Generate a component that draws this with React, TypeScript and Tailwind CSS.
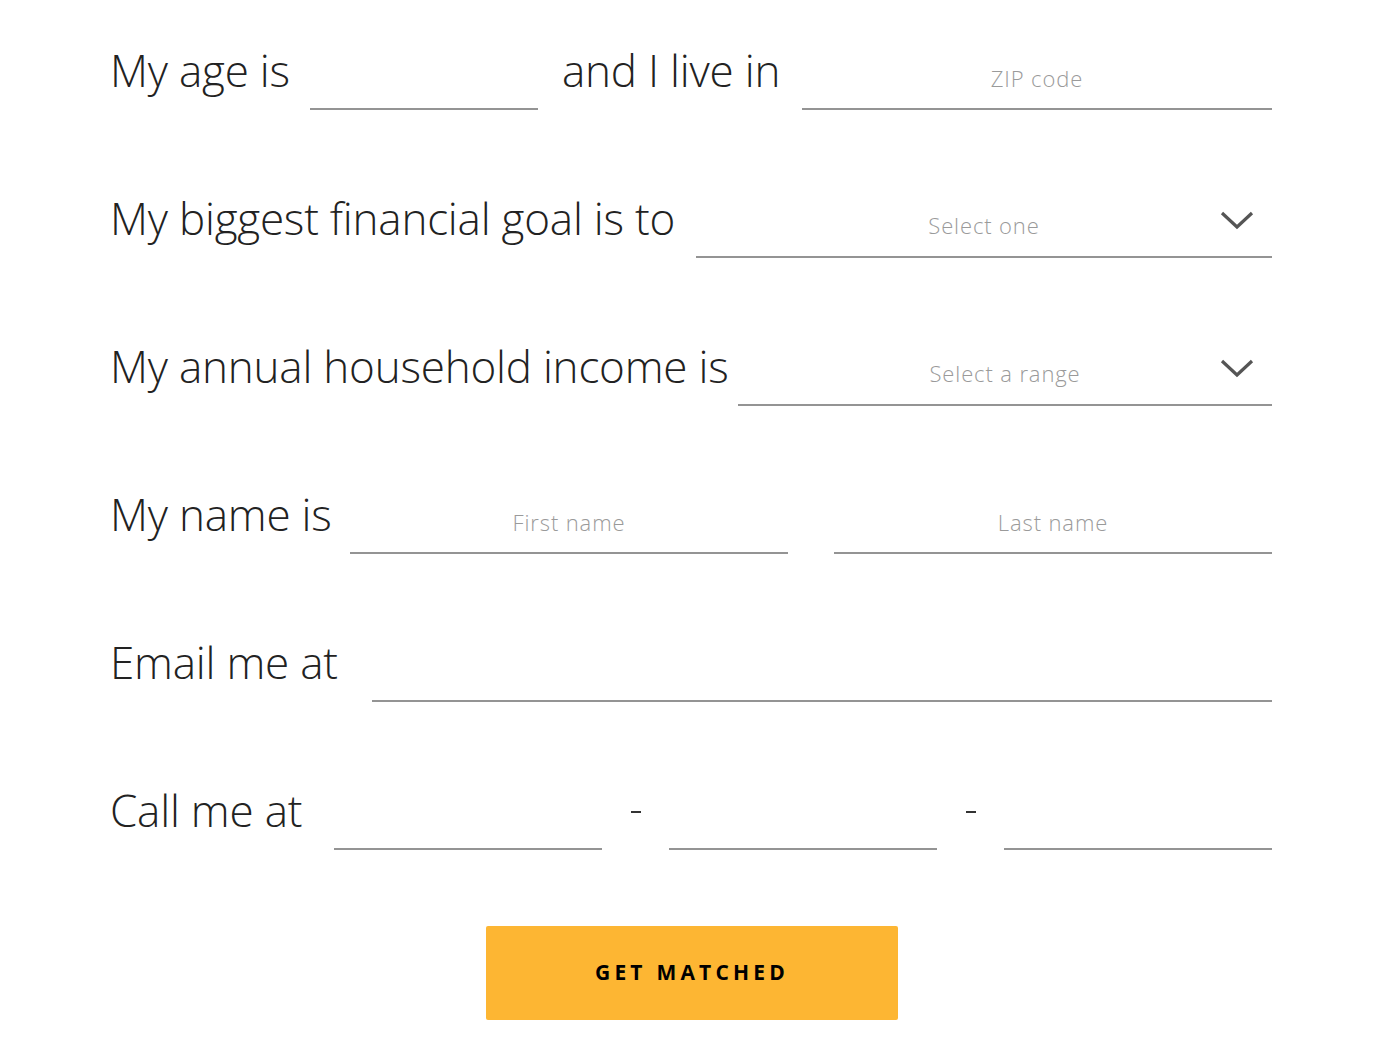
import React from "react";

const line = "border-0 border-b-2 border-[#949494] bg-transparent outline-none";
const field =
  line +
  " h-[56px] text-center text-[22px] font-light tracking-[0.04em] text-[#333] placeholder:text-[#9a9a9a] pb-[6px]";

function Label({ children, className = "" }: { children: React.ReactNode; className?: string }) {
  return (
    <span
      className={
        "whitespace-nowrap text-[44px] font-light leading-none text-[#222] pb-[18px] tracking-[-0.005em] " +
        className
      }
    >
      {children}
    </span>
  );
}

function Chevron() {
  return (
    <svg
      className="absolute right-[18px] top-[8px]"
      width="34"
      height="20"
      viewBox="0 0 34 20"
      fill="none"
    >
      <path d="M2 3 L17 17 L32 3" stroke="#555" strokeWidth="3.2" />
    </svg>
  );
}

function Select({ placeholder, className }: { placeholder: string; className: string }) {
  return (
    <div className={"relative " + className}>
      <div
        className={
          line +
          " h-[56px] flex items-end justify-center pb-[20px] text-[22px] font-light tracking-[0.04em] text-[#9a9a9a] leading-none"
        }
      >
        {placeholder}
      </div>
      <Chevron />
    </div>
  );
}

function Dash() {
  return (
    <div className="flex-1 flex justify-center pb-[37px]">
      <div className="w-[10px] h-[2px] bg-[#333]" />
    </div>
  );
}

export default function App() {
  return (
    <div
      className="min-h-screen bg-white pt-[48px] pl-[110px] pr-[126px]"
      style={{ fontFamily: '"Open Sans", "Noto Sans", sans-serif' }}
    >
      <form className="flex flex-col gap-[86px]">
        {/* age + zip */}
        <div className="flex items-end">
          <Label className="w-[200px]">My age is</Label>
          <input className={field + " w-[228px]"} />
          <Label className="flex-1 pl-[24px]">and I live in</Label>
          <input className={field + " w-[470px]"} placeholder="ZIP code" />
        </div>

        {/* goal */}
        <div className="flex items-end">
          <Label className="flex-1">My biggest financial goal is to</Label>
          <Select placeholder="Select one" className="w-[576px]" />
        </div>

        {/* income */}
        <div className="flex items-end">
          <Label className="flex-1">My annual household income is</Label>
          <Select placeholder="Select a range" className="w-[534px]" />
        </div>

        {/* name */}
        <div className="flex items-end">
          <Label className="flex-1">My name is</Label>
          <input className={field + " w-[438px]"} placeholder="First name" />
          <input className={field + " w-[438px] ml-[46px]"} placeholder="Last name" />
        </div>

        {/* email */}
        <div className="flex items-end">
          <Label className="flex-1">Email me at</Label>
          <input className={field + " w-[900px]"} />
        </div>

        {/* phone */}
        <div className="flex items-end">
          <Label className="w-[224px]">Call me at</Label>
          <input className={field + " w-[268px]"} />
          <Dash />
          <input className={field + " w-[268px]"} />
          <Dash />
          <input className={field + " w-[268px]"} />
        </div>
      </form>

      <div className="flex justify-center pt-[76px] pb-[24px]">
        <button
          type="button"
          className="w-[412px] h-[94px] rounded-[2px] bg-[#fdb633] text-[21px] font-bold tracking-[0.2em] text-black ml-[2px]"
        >
          GET MATCHED
        </button>
      </div>
    </div>
  );
}
